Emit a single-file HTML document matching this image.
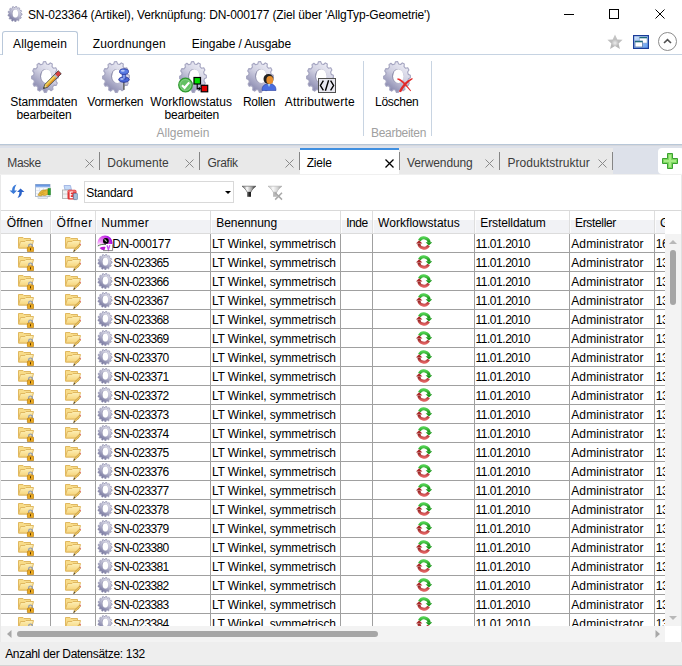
<!DOCTYPE html><html><head><meta charset="utf-8"><style>
*{margin:0;padding:0;box-sizing:border-box}
html,body{width:682px;height:666px;overflow:hidden;background:#fff}
body{position:relative;font-family:"Liberation Sans",sans-serif;font-size:12px;color:#000}
.t{position:absolute;white-space:nowrap;font-size:12px;line-height:16px}
.a{position:absolute}
svg.i{position:absolute;overflow:visible}

</style></head><body>
<svg width="0" height="0" style="position:absolute">
<defs>
<linearGradient id="gg" x1="0.85" y1="0.05" x2="0.25" y2="1">
<stop offset="0" stop-color="#f0f0f7"/><stop offset="0.45" stop-color="#d0d0e2"/><stop offset="1" stop-color="#8080a8"/></linearGradient>
<linearGradient id="gh" x1="0" y1="0" x2="1" y2="1">
<stop offset="0" stop-color="#7a7a9a"/><stop offset="1" stop-color="#c8c8dc"/></linearGradient>
<symbol id="gear" viewBox="0 0 32 32">
<path d="M27.26,13.38L29.31,14.21L29.38,16.79L27.38,17.78L26.89,20.20L28.30,22.10L27.24,24.37L25.08,24.08L23.60,25.89L24.00,28.35L22.09,29.71L20.35,28.22L18.28,28.94L17.55,31.30L15.31,31.38L14.45,29.08L12.35,28.51L10.69,30.14L8.71,28.92L8.97,26.44L7.39,24.74L5.25,25.19L4.07,23.01L5.37,21.00L4.74,18.62L2.69,17.79L2.62,15.21L4.62,14.22L5.11,11.80L3.70,9.90L4.76,7.63L6.92,7.92L8.40,6.11L8.00,3.65L9.91,2.29L11.65,3.78L13.72,3.06L14.45,0.70L16.69,0.62L17.55,2.92L19.65,3.49L21.31,1.86L23.29,3.08L23.03,5.56L24.61,7.26L26.75,6.81L27.93,8.99L26.63,11.00Z" fill="url(#gg)" stroke="#a4a4c0" stroke-width="1.1" stroke-linejoin="round"/>
<ellipse cx="16.8" cy="15.4" rx="5.7" ry="7.3" fill="url(#gh)"/>
<ellipse cx="17.3" cy="15.2" rx="5.2" ry="6.9" fill="#fff"/>
</symbol>
<linearGradient id="sg" x1="0.85" y1="0.05" x2="0.25" y2="1">
<stop offset="0" stop-color="#e4e4ee"/><stop offset="0.45" stop-color="#bcbcd2"/><stop offset="1" stop-color="#6c6c96"/></linearGradient>
<symbol id="sgear" viewBox="0 0 32 32">
<path d="M27.90,14.70L30.16,15.65L30.04,18.03L27.70,18.70L27.09,20.86L28.69,22.85L27.57,24.89L25.20,24.30L23.74,25.91L24.31,28.47L22.44,29.72L20.60,28.00L18.62,28.68L18.03,31.24L15.84,31.40L14.94,28.95L12.90,28.55L11.28,30.52L9.28,29.56L9.53,26.93L7.88,25.55L5.61,26.47L4.25,24.61L5.60,22.41L4.73,20.36L2.32,20.02L1.92,17.69L4.05,16.42L4.16,14.16L2.17,12.65L2.81,10.38L5.24,10.33L6.30,8.39L5.18,6.05L6.72,4.36L8.89,5.55L10.66,4.37L10.68,1.73L12.76,1.01L14.18,3.15L16.25,3.00L17.39,0.67L19.54,1.09L19.88,3.70L21.78,4.62L23.78,3.13L25.51,4.59L24.69,7.07L25.98,8.84L28.39,8.54L29.30,10.70L27.51,12.48Z" fill="url(#sg)" stroke="#9090b0" stroke-width="1.4" stroke-linejoin="round"/>
<ellipse cx="16.2" cy="15.2" rx="6.2" ry="8.4" fill="url(#gh)"/>
<ellipse cx="16.7" cy="15" rx="5.6" ry="7.9" fill="#fff"/>
</symbol>
<linearGradient id="fold" x1="0" y1="0" x2="0" y2="1"><stop offset="0" stop-color="#fdf0b8"/><stop offset="1" stop-color="#f6d47a"/></linearGradient>
<symbol id="folder" viewBox="0 0 16 16">
<path d="M0.5,1.5 H5 L6,2.5 H12.5 V12 H0.5 Z" fill="#f8dc88" stroke="#e0b860" stroke-width="1"/>
<path d="M2.5,5.5 H7 L8,4.5 H15.5 L13.5,12 H0.5 Z" fill="url(#fold)" stroke="#e0b860" stroke-width="1"/>
</symbol>
<symbol id="lockf" viewBox="0 0 16 16">
<use href="#folder" width="16" height="16"/>
<path d="M10.7,11 V9.8 A1.8,1.8 0 0 1 14.3,9.8 V11" fill="none" stroke="#8a9ab8" stroke-width="1.2"/>
<rect x="9.4" y="11" width="6.2" height="4.8" rx="0.8" fill="#eaaa22" stroke="#c08418" stroke-width="0.8"/>
<rect x="12.05" y="12.2" width="0.9" height="2.2" fill="#402808"/>
</symbol>
<symbol id="penf" viewBox="0 0 16 16">
<use href="#folder" width="16" height="16"/>
<path d="M8.5,16 L9.2,13.5 L14.5,8.2 L15.6,9.3 L10.3,14.6 Z" fill="#f0c860" stroke="#b08830" stroke-width="0.6"/>
<path d="M8.5,16 L9.2,13.5 L10.3,14.6Z" fill="#444"/>
<path d="M14.5,8.2 L15.6,9.3 L16,8.6 L15.2,7.6Z" fill="#e06060"/>
</symbol>
<linearGradient id="wg" x1="0" y1="0" x2="0" y2="1"><stop offset="0" stop-color="#50d050"/><stop offset="1" stop-color="#108a10"/></linearGradient>
<linearGradient id="wr" x1="0" y1="1" x2="0" y2="0"><stop offset="0" stop-color="#e06060"/><stop offset="1" stop-color="#8a1c1c"/></linearGradient>
<symbol id="wf" viewBox="0 0 16 16">
<path d="M3.4,5.4 A5.3,5.3 0 0 1 13.2,7.4" fill="none" stroke="url(#wg)" stroke-width="3"/>
<path d="M9.6,7.2 L16.2,7.2 L12.9,10.6Z" fill="#189818"/>
<path d="M12.6,10.6 A5.3,5.3 0 0 1 2.8,8.6" fill="none" stroke="url(#wr)" stroke-width="3"/>
<path d="M-0.2,8.6 L6.4,8.6 L3.1,5.2Z" fill="#a82828"/>
</symbol>
</defs></svg>
<svg class="i" style="left:7px;top:6px" width="16" height="16" viewBox="0 0 16 16"><use href="#sgear" width="16" height="16"/></svg>
<div class="t" style="left:28.0px;top:7.0px;letter-spacing:-0.143px;">SN-023364 (Artikel), Verknüpfung: DN-000177 (Ziel über 'AllgTyp-Geometrie')</div>
<div class="a" style="left:564px;top:14px;width:10px;height:1px;background:#000;"></div>
<div class="a" style="left:609px;top:9px;width:10px;height:10px;border:1px solid #000"></div>
<svg class="i" style="left:655px;top:9px" width="10" height="10"><path d="M0.5,0.5 L9.5,9.5 M9.5,0.5 L0.5,9.5" stroke="#000" stroke-width="1"/></svg>
<div class="a" style="left:0px;top:54px;width:682px;height:1px;background:#c6d3e2;"></div>
<div class="a" style="left:2px;top:31px;width:76px;height:24px;background:#fff;border:1px solid #b9c8da;border-bottom:none;border-radius:3px 3px 0 0"></div>
<div class="t" style="left:13.0px;top:36.0px;letter-spacing:0.144px;">Allgemein</div>
<div class="t" style="left:92.8px;top:36.0px;letter-spacing:0.148px;">Zuordnungen</div>
<div class="t" style="left:191.8px;top:36.0px;letter-spacing:-0.089px;">Eingabe / Ausgabe</div>
<svg class="i" style="left:607px;top:34px" width="16" height="16" viewBox="0 0 16 16"><defs><linearGradient id="st" x1="0" y1="0" x2="0" y2="1"><stop offset="0" stop-color="#c8c8c8"/><stop offset="1" stop-color="#b4b4b4"/></linearGradient><radialGradient id="st2" cx="0.5" cy="0.55" r="0.4"><stop offset="0" stop-color="#ececec"/><stop offset="1" stop-color="#ececec" stop-opacity="0"/></radialGradient></defs><path d="M8,0.5 L10.3,5.5 L15.6,5.8 L11.6,9.4 L12.9,15 L8,12.1 L3.1,15 L4.4,9.4 L0.4,5.8 L5.7,5.5Z" fill="url(#st)"/><circle cx="8" cy="8.6" r="4.5" fill="url(#st2)"/></svg>
<svg class="i" style="left:633px;top:35px" width="16" height="14" viewBox="0 0 16 14"><defs><linearGradient id="wi" x1="0" y1="0" x2="1" y2="1"><stop offset="0" stop-color="#d8e8fc"/><stop offset="1" stop-color="#5a96ec"/></linearGradient></defs><rect x="0.6" y="0.6" width="14.8" height="12.8" fill="url(#wi)" stroke="#1a3c98" stroke-width="1.2"/><rect x="6.5" y="2" width="7.5" height="6" fill="#fff" stroke="#90a8c8" stroke-width="0.5"/><rect x="6.5" y="2" width="7.5" height="1.3" fill="#1e6c7a"/><rect x="2" y="6" width="7.5" height="6" fill="#fff" stroke="#5a78a8" stroke-width="0.8"/><rect x="2" y="6" width="7.5" height="1.3" fill="#1e6c7a"/></svg>
<svg class="i" style="left:658px;top:32px" width="19" height="19" viewBox="0 0 19 19"><circle cx="9.5" cy="9.5" r="9" fill="#fff" stroke="#8c8c8c" stroke-width="1"/><path d="M6,11 L9.5,7.6 L13,11" fill="none" stroke="#505050" stroke-width="1.6"/></svg>
<svg class="i" style="left:28.5px;top:60.5px" width="32" height="32" viewBox="0 0 32 32"><use href="#gear" width="32" height="32"/></svg>
<svg class="i" style="left:99.5px;top:60.5px" width="32" height="32" viewBox="0 0 32 32"><use href="#gear" width="32" height="32"/></svg>
<svg class="i" style="left:176.5px;top:60.5px" width="32" height="32" viewBox="0 0 32 32"><use href="#gear" width="32" height="32"/></svg>
<svg class="i" style="left:243.5px;top:60.5px" width="32" height="32" viewBox="0 0 32 32"><use href="#gear" width="32" height="32"/></svg>
<svg class="i" style="left:303.5px;top:60.5px" width="32" height="32" viewBox="0 0 32 32"><use href="#gear" width="32" height="32"/></svg>
<svg class="i" style="left:380.5px;top:60.5px" width="32" height="32" viewBox="0 0 32 32"><use href="#gear" width="32" height="32"/></svg>
<svg class="i" style="left:42px;top:71px" width="20" height="20" viewBox="0 0 20 20"><path d="M1.50,17.50 L2.63,13.68 L5.32,16.37Z" fill="#f4e080"/><path d="M2.63,13.68 L11.82,4.49 L13.17,5.83 L3.97,15.03Z" fill="#f8d850"/><path d="M3.97,15.03 L13.17,5.83 L14.51,7.18 L5.32,16.37Z" fill="#eca020"/><path d="M11.82,4.49 L13.24,3.08 L15.92,5.76 L14.51,7.18Z" fill="#b8b8b8"/><path d="M13.10,2.93 L16.28,-0.25 L19.25,2.72 L16.07,5.90Z" fill="#d84040"/><path d="M1.50,17.50 L1.92,16.09 L2.91,17.08Z" fill="#111"/><path d="M1.50,17.50 L2.63,13.68 L16.28,-0.25 L19.25,2.72 L5.32,16.37Z" fill="none" stroke="#222" stroke-width="0.7" stroke-linejoin="round"/></svg>
<svg class="i" style="left:115.8px;top:67px" width="16" height="26" viewBox="0 0 16 26"><rect x="7" y="14" width="1.6" height="8.8" fill="#6c6c6c"/><ellipse cx="8" cy="12.6" rx="5.3" ry="2.7" fill="#4a68d8" stroke="#1e2c90" stroke-width="0.8"/><rect x="6.2" y="6.5" width="3.6" height="5.5" fill="#7c98ec" stroke="#1e2c90" stroke-width="0.6"/><ellipse cx="8" cy="4.6" rx="4.5" ry="2.8" fill="#5a7ce4" stroke="#1e2c90" stroke-width="0.8"/><ellipse cx="6.8" cy="3.8" rx="2" ry="1" fill="#b8c8f8"/><ellipse cx="6" cy="12" rx="1.8" ry="0.9" fill="#a0b4f0"/></svg>
<svg class="i" style="left:176.5px;top:76px" width="34" height="18" viewBox="0 0 34 18"><circle cx="8.5" cy="9" r="6.8" fill="#62c062" stroke="#2e9a2e" stroke-width="1.2"/><circle cx="8.5" cy="9" r="5.4" fill="none" stroke="#9ad89a" stroke-width="0.6"/><path d="M5,9.2 L7.6,11.8 L12.2,6.4" fill="none" stroke="#fff" stroke-width="2.2"/><rect x="17" y="1.5" width="6.5" height="6.5" fill="#00e000" stroke="#000" stroke-width="1.2"/><rect x="24.2" y="9.3" width="6.5" height="6.5" fill="#e00000" stroke="#000" stroke-width="1.2"/><path d="M20.2,8 V12.6 H22.5" fill="none" stroke="#000" stroke-width="1.1"/><path d="M21.8,10.8 L24.2,12.6 L21.8,14.4Z" fill="#000"/></svg>
<svg class="i" style="left:261px;top:73px" width="16" height="18" viewBox="0 0 16 18"><path d="M1,17.5 C1,12 4,11 8,11 C12,11 15,12 15,17.5Z" fill="#4a6ee0" stroke="#2a40a0" stroke-width="0.6"/><path d="M6.5,11 L8,14 L9.5,11Z" fill="#a8d0f0"/><circle cx="7.5" cy="6" r="5" fill="#222"/><ellipse cx="8.8" cy="7" rx="3.4" ry="4" fill="#e89030"/></svg>
<svg class="i" style="left:318px;top:78px" width="18" height="15" viewBox="0 0 18 15"><rect x="0.5" y="0.5" width="17" height="14" fill="#e8e8f0" stroke="#505050" stroke-width="1"/><path d="M5.4,2.6 L2.4,7.5 L5.4,12.4 M12.6,2.6 L15.6,7.5 L12.6,12.4 M10.6,2.2 L7.4,12.8" fill="none" stroke="#000" stroke-width="1.4"/></svg>
<svg class="i" style="left:392px;top:72px" width="26" height="24" viewBox="0 0 26 24"><path d="M5.6,6.2 C8.5,6.4 11,8.6 13.5,11.5 C15.5,13.8 17.5,16.5 19.2,18.8 L18.4,19.2 C16.5,17 14.2,14.5 12,12.4 C9.8,10.2 7.5,8.6 5.2,7.6Z" fill="#e83030"/><path d="M20.2,6 L20.8,6.9 C17.5,9 15,11.5 13,14 C11.5,16 10.2,18 9,20.2 L6.8,19.6 C8,17 9.5,14.5 11.5,12.2 C14,9.5 17,7.3 20.2,6Z" fill="#e02828"/></svg>
<div class="t" style="left:10.3px;top:94.0px;letter-spacing:-0.102px;">Stammdaten</div>
<div class="t" style="left:16.5px;top:107.0px;letter-spacing:-0.170px;">bearbeiten</div>
<div class="t" style="left:87.3px;top:94.0px;letter-spacing:-0.226px;">Vormerken</div>
<div class="t" style="left:150.3px;top:94.0px;letter-spacing:0.041px;">Workflowstatus</div>
<div class="t" style="left:164.6px;top:107.0px;letter-spacing:-0.230px;">bearbeiten</div>
<div class="t" style="left:243.0px;top:94.0px;letter-spacing:-0.339px;">Rollen</div>
<div class="t" style="left:284.8px;top:94.0px;letter-spacing:0.204px;">Attributwerte</div>
<div class="t" style="left:375.0px;top:94.0px;letter-spacing:-0.266px;">Löschen</div>
<div class="t" style="left:156.4px;top:125.0px;letter-spacing:0.033px;color:#a0a0a0;">Allgemein</div>
<div class="t" style="left:371.0px;top:125.0px;letter-spacing:-0.303px;color:#a0a0a0;">Bearbeiten</div>
<div class="a" style="left:363px;top:61px;width:1px;height:75px;background:#c8d4e2;"></div>
<div class="a" style="left:431px;top:61px;width:1px;height:75px;background:#c8d4e2;"></div>
<div class="a" style="left:0px;top:144px;width:682px;height:1px;background:#b8c7d8;"></div>
<div class="a" style="left:0px;top:145px;width:682px;height:30px;background:#dde1ea;"></div>
<div class="a" style="left:0px;top:145px;width:682px;height:1px;background:#d5d7dc;"></div>
<div class="a" style="left:0px;top:148px;width:613px;height:27px;background:#e9e9e9;"></div>
<div class="t" style="left:7.3px;top:155.0px;letter-spacing:-0.369px;color:#3c3c3c;">Maske</div>
<div class="a" style="left:99px;top:152px;width:1px;height:18px;background:#858585;"></div>
<div class="t" style="left:107.3px;top:155.0px;letter-spacing:0.005px;color:#3c3c3c;">Dokumente</div>
<div class="a" style="left:199px;top:152px;width:1px;height:18px;background:#858585;"></div>
<div class="t" style="left:207.4px;top:155.0px;letter-spacing:-0.267px;color:#3c3c3c;">Grafik</div>
<div class="a" style="left:299px;top:152px;width:1px;height:18px;background:#858585;"></div>
<div class="t" style="left:407.1px;top:155.0px;letter-spacing:-0.122px;color:#3c3c3c;">Verwendung</div>
<div class="a" style="left:499px;top:152px;width:1px;height:18px;background:#858585;"></div>
<div class="t" style="left:507.4px;top:155.0px;letter-spacing:0.064px;color:#3c3c3c;">Produktstruktur</div>
<div class="a" style="left:612px;top:152px;width:1px;height:18px;background:#858585;"></div>
<svg class="i" style="left:85px;top:159px" width="9" height="9"><path d="M0.5,0.5 L8.5,8.5 M8.5,0.5 L0.5,8.5" stroke="#8a8a8a" stroke-width="1"/></svg>
<svg class="i" style="left:185px;top:159px" width="9" height="9"><path d="M0.5,0.5 L8.5,8.5 M8.5,0.5 L0.5,8.5" stroke="#8a8a8a" stroke-width="1"/></svg>
<svg class="i" style="left:285px;top:159px" width="9" height="9"><path d="M0.5,0.5 L8.5,8.5 M8.5,0.5 L0.5,8.5" stroke="#8a8a8a" stroke-width="1"/></svg>
<svg class="i" style="left:485px;top:159px" width="9" height="9"><path d="M0.5,0.5 L8.5,8.5 M8.5,0.5 L0.5,8.5" stroke="#8a8a8a" stroke-width="1"/></svg>
<svg class="i" style="left:598px;top:159px" width="9" height="9"><path d="M0.5,0.5 L8.5,8.5 M8.5,0.5 L0.5,8.5" stroke="#8a8a8a" stroke-width="1"/></svg>
<div class="a" style="left:300px;top:148px;width:99px;height:26px;background:#fff;"></div>
<div class="a" style="left:300px;top:148px;width:99px;height:2px;background:#3f8fe0;"></div>
<div class="a" style="left:299px;top:152px;width:1px;height:18px;background:#858585;"></div>
<div class="a" style="left:399px;top:152px;width:1px;height:18px;background:#858585;"></div>
<div class="a" style="left:0px;top:174px;width:682px;height:1px;background:#f0f0f0;"></div>
<div class="t" style="left:306.7px;top:155.0px;letter-spacing:-0.163px;">Ziele</div>
<svg class="i" style="left:385px;top:159px" width="9" height="9"><path d="M0.5,0.5 L8.5,8.5 M8.5,0.5 L0.5,8.5" stroke="#000" stroke-width="1.3"/></svg>
<div class="a" style="left:658px;top:148px;width:26px;height:26px;background:#fff;border-radius:4px"></div>
<svg class="i" style="left:662px;top:153px" width="16" height="16" viewBox="0 0 16 16"><path d="M5.5,0.5 H10.5 V5.5 H15.5 V10.5 H10.5 V15.5 H5.5 V10.5 H0.5 V5.5 H5.5Z" fill="#7ed860" stroke="#3aa030" stroke-width="1"/><path d="M7,2 H9 V7 H14 V9 H9 V14 H7 V9 H2 V7 H7Z" fill="#a8ec88"/></svg>
<div class="a" style="left:0px;top:175px;width:682px;height:491px;background:#e9e9e9;"></div>
<div class="a" style="left:1px;top:175px;width:680px;height:451px;background:#fff;"></div>
<svg class="i" style="left:9px;top:184px" width="16" height="15" viewBox="0 0 16 15"><path d="M7.5,0.5 C4,1.5 3,4 3.2,6.5 L0.5,6.5 L4.5,10 L8,6.5 L5.6,6.5 C5.6,4.5 6.2,2.5 7.5,0.5Z" fill="#3a7ad8"/><path d="M8.5,14 C12,13 13,10.5 12.8,8 L15.5,8 L11.5,4.5 L8,8 L10.4,8 C10.4,10 9.8,12 8.5,14Z" fill="#2a62c8"/></svg>
<svg class="i" style="left:35px;top:184px" width="16" height="15" viewBox="0 0 16 15"><defs><linearGradient id="tb" x1="0" y1="0" x2="0" y2="1"><stop offset="0" stop-color="#4a82dc"/><stop offset="1" stop-color="#a8c4f0"/></linearGradient></defs><rect x="0.5" y="0.5" width="14.5" height="12" fill="#f8fafc" stroke="#b0bccc"/><rect x="0.5" y="0.5" width="14.5" height="3" fill="url(#tb)"/><path d="M1,6.5 H14.5 M1,9.5 H14.5 M4.5,3.5 V12 M8.5,3.5 V12 M12,3.5 V12" stroke="#dde4ee" stroke-width="0.8"/><rect x="3" y="12.5" width="9.5" height="2" fill="#e4eaf2" stroke="#b8c4d0" stroke-width="0.6"/><path d="M2.8,11.2 L5,8 L7,6.2 L13,5.6 L13,10.4 L10,11.6 L7.5,11.2 L6,12 Z" fill="#e8b838" stroke="#a87c18" stroke-width="0.5"/><path d="M5,9.5 L8.5,8.2 M6,10.8 L9.5,9.6 M7.5,7.2 L11,6.8" stroke="#b88a20" stroke-width="0.5"/><rect x="13" y="4.4" width="2.5" height="6.6" fill="#2aa02a" stroke="#1a7a1a" stroke-width="0.4"/></svg>
<svg class="i" style="left:62px;top:185px" width="16" height="15" viewBox="0 0 16 15"><path d="M2,0.5 H8.5 L9.5,5 H3Z" fill="#c4daf8" stroke="#98ace0" stroke-width="0.8"/><rect x="0.5" y="5" width="8" height="8.5" fill="#f2f2f2" stroke="#a8a8a8" stroke-width="0.8"/><path d="M1,9 H7.5" stroke="#c8c8c8" stroke-width="0.8"/><rect x="5.5" y="4.8" width="9" height="9.8" rx="1.6" fill="#e03434"/><rect x="6" y="5.2" width="8" height="2" rx="1" fill="#f07070"/><path d="M8.2,7 V12.6 H10.8 M8.2,9.8 H10.3 M8.2,7 H10.8" fill="none" stroke="#fff" stroke-width="1.1"/><rect x="11.6" y="8.4" width="3.8" height="6.2" rx="0.6" fill="#a8c0d8" stroke="#5a82aa" stroke-width="0.7"/></svg>
<div class="a" style="left:84px;top:181px;width:150px;height:22px;border:1px solid #d9d9d9;background:#fff"></div>
<div class="t" style="left:86.3px;top:185.0px;letter-spacing:-0.273px;">Standard</div>
<svg class="i" style="left:225px;top:191px" width="6" height="3" viewBox="0 0 6 3"><path d="M0,0 H6 L3,3Z" fill="#000"/></svg>
<svg class="i" style="left:242px;top:186px" width="14" height="11" viewBox="0 0 14 11"><defs><linearGradient id="fl" x1="0" y1="0" x2="1" y2="0"><stop offset="0" stop-color="#585858"/><stop offset="0.35" stop-color="#fcfcfc"/><stop offset="0.7" stop-color="#a0a0a0"/><stop offset="1" stop-color="#000"/></linearGradient><linearGradient id="fn" x1="0" y1="0" x2="1" y2="0"><stop offset="0" stop-color="#707070"/><stop offset="0.5" stop-color="#303030"/><stop offset="1" stop-color="#000"/></linearGradient></defs><path d="M0,0.2 H14 C11.5,2.2 9.6,4 8.9,6.2 H5.1 C4.4,4 2.5,2.2 0,0.2Z" fill="url(#fl)" stroke="#505050" stroke-width="0.6" stroke-linejoin="round"/><rect x="5.1" y="6" width="3.8" height="4.8" fill="url(#fn)"/></svg>
<svg class="i" style="left:268px;top:186px" width="15" height="14" viewBox="0 0 15 14"><defs><linearGradient id="fl2" x1="0" y1="0" x2="1" y2="0"><stop offset="0" stop-color="#b8b8b8"/><stop offset="0.35" stop-color="#fafafa"/><stop offset="0.7" stop-color="#d0d0d0"/><stop offset="1" stop-color="#888"/></linearGradient></defs><path d="M0,0.2 H14 C11.5,2.2 9.6,4 8.9,6.2 H5.1 C4.4,4 2.5,2.2 0,0.2Z" fill="url(#fl2)" stroke="#b0b0b0" stroke-width="0.6" stroke-linejoin="round"/><rect x="5.1" y="6" width="3.8" height="4.8" fill="#b8b8b8"/><path d="M7.2,6.8 L14,13.6 M14,6.8 L7.2,13.6" stroke="#a8a8a8" stroke-width="1.5"/></svg>
<div class="a" style="left:1px;top:210px;width:680px;height:1px;background:#d9d9d9;"></div>
<div class="a" style="left:1px;top:211px;width:664px;height:9px;background:#ffffff;"></div>
<div class="a" style="left:1px;top:220px;width:664px;height:13px;background:#f1f2f5;"></div>
<div class="a" style="left:1px;top:233px;width:664px;height:1px;background:#dcdcdc;"></div>
<div class="a" style="left:50px;top:211px;width:1px;height:22px;background:#dedede;"></div>
<div class="a" style="left:51px;top:220px;width:1px;height:13px;background:#fbfbfc;"></div>
<div class="a" style="left:95px;top:211px;width:1px;height:22px;background:#dedede;"></div>
<div class="a" style="left:96px;top:220px;width:1px;height:13px;background:#fbfbfc;"></div>
<div class="a" style="left:210px;top:211px;width:1px;height:22px;background:#dedede;"></div>
<div class="a" style="left:211px;top:220px;width:1px;height:13px;background:#fbfbfc;"></div>
<div class="a" style="left:340px;top:211px;width:1px;height:22px;background:#dedede;"></div>
<div class="a" style="left:341px;top:220px;width:1px;height:13px;background:#fbfbfc;"></div>
<div class="a" style="left:372px;top:211px;width:1px;height:22px;background:#dedede;"></div>
<div class="a" style="left:373px;top:220px;width:1px;height:13px;background:#fbfbfc;"></div>
<div class="a" style="left:474px;top:211px;width:1px;height:22px;background:#dedede;"></div>
<div class="a" style="left:475px;top:220px;width:1px;height:13px;background:#fbfbfc;"></div>
<div class="a" style="left:569px;top:211px;width:1px;height:22px;background:#dedede;"></div>
<div class="a" style="left:570px;top:220px;width:1px;height:13px;background:#fbfbfc;"></div>
<div class="a" style="left:654px;top:211px;width:1px;height:22px;background:#dedede;"></div>
<div class="a" style="left:655px;top:220px;width:1px;height:13px;background:#fbfbfc;"></div>
<div class="t" style="left:6.8px;top:215.0px;letter-spacing:0.086px;">Öffnen</div>
<div class="t" style="left:56.6px;top:215.0px;letter-spacing:0.482px;width:35.6px;overflow:hidden;">Öffner</div>
<div class="t" style="left:101.3px;top:215.0px;letter-spacing:0.297px;">Nummer</div>
<div class="t" style="left:216.3px;top:215.0px;letter-spacing:-0.075px;">Benennung</div>
<div class="t" style="left:346.2px;top:215.0px;letter-spacing:-0.469px;width:22.3px;overflow:hidden;">Index</div>
<div class="t" style="left:378.1px;top:215.0px;letter-spacing:0.034px;">Workflowstatus</div>
<div class="t" style="left:480.3px;top:215.0px;letter-spacing:-0.107px;">Erstelldatum</div>
<div class="t" style="left:575.0px;top:215.0px;letter-spacing:-0.335px;">Ersteller</div>
<div class="t" style="left:660.0px;top:215.0px;letter-spacing:-0.002px;width:5.0px;overflow:hidden;">Geändert</div>
<svg class="i" style="left:18px;top:236px" width="16" height="16" viewBox="0 0 16 16"><use href="#lockf" width="16" height="16"/></svg>
<svg class="i" style="left:65px;top:236px" width="16" height="16" viewBox="0 0 16 16"><use href="#penf" width="16" height="16"/></svg>
<svg class="i" style="left:97px;top:235px" width="16" height="16" viewBox="0 0 16 16"><defs><radialGradient id="dn" cx="0.15" cy="0.65" r="0.9"><stop offset="0" stop-color="#ffffff"/><stop offset="0.3" stop-color="#f090f8"/><stop offset="0.7" stop-color="#d040e8"/><stop offset="1" stop-color="#9000e0"/></radialGradient></defs><circle cx="8" cy="8" r="7.6" fill="url(#dn)"/><path d="M0.6,10.5 C3,9 6.5,8.5 9,9 L15.5,9 V16 H6 C3,15.5 1.2,13.5 0.6,10.5Z" fill="#fff"/><path d="M0.8,11 C3,9.5 6.5,9 9,9.5" fill="none" stroke="#406040" stroke-width="0.9"/><path d="M2.5,13 C4.5,12 6.5,11.5 8.5,12 L7.5,15 C5.5,15.3 3.8,14.5 2.5,13Z" fill="#b818d0"/><circle cx="8.9" cy="5.9" r="2.9" fill="#000"/><path d="M7.6,4.4 L9.8,6.6" stroke="#b0d8b0" stroke-width="1.1"/><path d="M10,10.2 L11.4,14.6 L12.8,10.2" fill="none" stroke="#c850f0" stroke-width="1.3"/><path d="M6,15.6 H15.6 V9.5" fill="none" stroke="#707070" stroke-width="0.8"/></svg>
<div class="t" style="left:112.3px;top:236.0px;letter-spacing:-0.353px;">DN-000177</div>
<div class="t" style="left:211.9px;top:236.0px;letter-spacing:-0.102px;">LT Winkel, symmetrisch</div>
<svg class="i" style="left:416px;top:235px" width="16" height="16" viewBox="0 0 16 16"><use href="#wf" width="16" height="16"/></svg>
<div class="t" style="left:475.5px;top:236.0px;letter-spacing:-0.474px;">11.01.2010</div>
<div class="t" style="left:571.2px;top:236.0px;letter-spacing:0.132px;">Administrator</div>
<div class="t" style="left:655.8px;top:236.0px;letter-spacing:-0.563px;width:9.2px;overflow:hidden;">16.03.2010</div>
<div class="a" style="left:1px;top:252px;width:664px;height:1px;background:#a0a0a0;"></div>
<svg class="i" style="left:18px;top:255px" width="16" height="16" viewBox="0 0 16 16"><use href="#lockf" width="16" height="16"/></svg>
<svg class="i" style="left:65px;top:255px" width="16" height="16" viewBox="0 0 16 16"><use href="#penf" width="16" height="16"/></svg>
<svg class="i" style="left:96.8px;top:254px" width="16" height="16" viewBox="0 0 16 16"><use href="#sgear" width="16" height="16"/></svg>
<div class="t" style="left:113.5px;top:255.0px;letter-spacing:-0.623px;">SN-023365</div>
<div class="t" style="left:211.9px;top:255.0px;letter-spacing:-0.102px;">LT Winkel, symmetrisch</div>
<svg class="i" style="left:416px;top:254px" width="16" height="16" viewBox="0 0 16 16"><use href="#wf" width="16" height="16"/></svg>
<div class="t" style="left:475.5px;top:255.0px;letter-spacing:-0.474px;">11.01.2010</div>
<div class="t" style="left:571.2px;top:255.0px;letter-spacing:0.132px;">Administrator</div>
<div class="t" style="left:655.8px;top:255.0px;letter-spacing:-0.563px;width:9.2px;overflow:hidden;">13.01.2010</div>
<div class="a" style="left:1px;top:271px;width:664px;height:1px;background:#a0a0a0;"></div>
<svg class="i" style="left:18px;top:274px" width="16" height="16" viewBox="0 0 16 16"><use href="#lockf" width="16" height="16"/></svg>
<svg class="i" style="left:65px;top:274px" width="16" height="16" viewBox="0 0 16 16"><use href="#penf" width="16" height="16"/></svg>
<svg class="i" style="left:96.8px;top:273px" width="16" height="16" viewBox="0 0 16 16"><use href="#sgear" width="16" height="16"/></svg>
<div class="t" style="left:113.5px;top:274.0px;letter-spacing:-0.623px;">SN-023366</div>
<div class="t" style="left:211.9px;top:274.0px;letter-spacing:-0.102px;">LT Winkel, symmetrisch</div>
<svg class="i" style="left:416px;top:273px" width="16" height="16" viewBox="0 0 16 16"><use href="#wf" width="16" height="16"/></svg>
<div class="t" style="left:475.5px;top:274.0px;letter-spacing:-0.474px;">11.01.2010</div>
<div class="t" style="left:571.2px;top:274.0px;letter-spacing:0.132px;">Administrator</div>
<div class="t" style="left:655.8px;top:274.0px;letter-spacing:-0.563px;width:9.2px;overflow:hidden;">13.01.2010</div>
<div class="a" style="left:1px;top:290px;width:664px;height:1px;background:#a0a0a0;"></div>
<svg class="i" style="left:18px;top:293px" width="16" height="16" viewBox="0 0 16 16"><use href="#lockf" width="16" height="16"/></svg>
<svg class="i" style="left:65px;top:293px" width="16" height="16" viewBox="0 0 16 16"><use href="#penf" width="16" height="16"/></svg>
<svg class="i" style="left:96.8px;top:292px" width="16" height="16" viewBox="0 0 16 16"><use href="#sgear" width="16" height="16"/></svg>
<div class="t" style="left:113.5px;top:293.0px;letter-spacing:-0.623px;">SN-023367</div>
<div class="t" style="left:211.9px;top:293.0px;letter-spacing:-0.102px;">LT Winkel, symmetrisch</div>
<svg class="i" style="left:416px;top:292px" width="16" height="16" viewBox="0 0 16 16"><use href="#wf" width="16" height="16"/></svg>
<div class="t" style="left:475.5px;top:293.0px;letter-spacing:-0.474px;">11.01.2010</div>
<div class="t" style="left:571.2px;top:293.0px;letter-spacing:0.132px;">Administrator</div>
<div class="t" style="left:655.8px;top:293.0px;letter-spacing:-0.563px;width:9.2px;overflow:hidden;">13.01.2010</div>
<div class="a" style="left:1px;top:309px;width:664px;height:1px;background:#a0a0a0;"></div>
<svg class="i" style="left:18px;top:312px" width="16" height="16" viewBox="0 0 16 16"><use href="#lockf" width="16" height="16"/></svg>
<svg class="i" style="left:65px;top:312px" width="16" height="16" viewBox="0 0 16 16"><use href="#penf" width="16" height="16"/></svg>
<svg class="i" style="left:96.8px;top:311px" width="16" height="16" viewBox="0 0 16 16"><use href="#sgear" width="16" height="16"/></svg>
<div class="t" style="left:113.5px;top:312.0px;letter-spacing:-0.623px;">SN-023368</div>
<div class="t" style="left:211.9px;top:312.0px;letter-spacing:-0.102px;">LT Winkel, symmetrisch</div>
<svg class="i" style="left:416px;top:311px" width="16" height="16" viewBox="0 0 16 16"><use href="#wf" width="16" height="16"/></svg>
<div class="t" style="left:475.5px;top:312.0px;letter-spacing:-0.474px;">11.01.2010</div>
<div class="t" style="left:571.2px;top:312.0px;letter-spacing:0.132px;">Administrator</div>
<div class="t" style="left:655.8px;top:312.0px;letter-spacing:-0.563px;width:9.2px;overflow:hidden;">13.01.2010</div>
<div class="a" style="left:1px;top:328px;width:664px;height:1px;background:#a0a0a0;"></div>
<svg class="i" style="left:18px;top:331px" width="16" height="16" viewBox="0 0 16 16"><use href="#lockf" width="16" height="16"/></svg>
<svg class="i" style="left:65px;top:331px" width="16" height="16" viewBox="0 0 16 16"><use href="#penf" width="16" height="16"/></svg>
<svg class="i" style="left:96.8px;top:330px" width="16" height="16" viewBox="0 0 16 16"><use href="#sgear" width="16" height="16"/></svg>
<div class="t" style="left:113.5px;top:331.0px;letter-spacing:-0.623px;">SN-023369</div>
<div class="t" style="left:211.9px;top:331.0px;letter-spacing:-0.102px;">LT Winkel, symmetrisch</div>
<svg class="i" style="left:416px;top:330px" width="16" height="16" viewBox="0 0 16 16"><use href="#wf" width="16" height="16"/></svg>
<div class="t" style="left:475.5px;top:331.0px;letter-spacing:-0.474px;">11.01.2010</div>
<div class="t" style="left:571.2px;top:331.0px;letter-spacing:0.132px;">Administrator</div>
<div class="t" style="left:655.8px;top:331.0px;letter-spacing:-0.563px;width:9.2px;overflow:hidden;">13.01.2010</div>
<div class="a" style="left:1px;top:347px;width:664px;height:1px;background:#a0a0a0;"></div>
<svg class="i" style="left:18px;top:350px" width="16" height="16" viewBox="0 0 16 16"><use href="#lockf" width="16" height="16"/></svg>
<svg class="i" style="left:65px;top:350px" width="16" height="16" viewBox="0 0 16 16"><use href="#penf" width="16" height="16"/></svg>
<svg class="i" style="left:96.8px;top:349px" width="16" height="16" viewBox="0 0 16 16"><use href="#sgear" width="16" height="16"/></svg>
<div class="t" style="left:113.5px;top:350.0px;letter-spacing:-0.623px;">SN-023370</div>
<div class="t" style="left:211.9px;top:350.0px;letter-spacing:-0.102px;">LT Winkel, symmetrisch</div>
<svg class="i" style="left:416px;top:349px" width="16" height="16" viewBox="0 0 16 16"><use href="#wf" width="16" height="16"/></svg>
<div class="t" style="left:475.5px;top:350.0px;letter-spacing:-0.474px;">11.01.2010</div>
<div class="t" style="left:571.2px;top:350.0px;letter-spacing:0.132px;">Administrator</div>
<div class="t" style="left:655.8px;top:350.0px;letter-spacing:-0.563px;width:9.2px;overflow:hidden;">13.01.2010</div>
<div class="a" style="left:1px;top:366px;width:664px;height:1px;background:#a0a0a0;"></div>
<svg class="i" style="left:18px;top:369px" width="16" height="16" viewBox="0 0 16 16"><use href="#lockf" width="16" height="16"/></svg>
<svg class="i" style="left:65px;top:369px" width="16" height="16" viewBox="0 0 16 16"><use href="#penf" width="16" height="16"/></svg>
<svg class="i" style="left:96.8px;top:368px" width="16" height="16" viewBox="0 0 16 16"><use href="#sgear" width="16" height="16"/></svg>
<div class="t" style="left:113.5px;top:369.0px;letter-spacing:-0.623px;">SN-023371</div>
<div class="t" style="left:211.9px;top:369.0px;letter-spacing:-0.102px;">LT Winkel, symmetrisch</div>
<svg class="i" style="left:416px;top:368px" width="16" height="16" viewBox="0 0 16 16"><use href="#wf" width="16" height="16"/></svg>
<div class="t" style="left:475.5px;top:369.0px;letter-spacing:-0.474px;">11.01.2010</div>
<div class="t" style="left:571.2px;top:369.0px;letter-spacing:0.132px;">Administrator</div>
<div class="t" style="left:655.8px;top:369.0px;letter-spacing:-0.563px;width:9.2px;overflow:hidden;">13.01.2010</div>
<div class="a" style="left:1px;top:385px;width:664px;height:1px;background:#a0a0a0;"></div>
<svg class="i" style="left:18px;top:388px" width="16" height="16" viewBox="0 0 16 16"><use href="#lockf" width="16" height="16"/></svg>
<svg class="i" style="left:65px;top:388px" width="16" height="16" viewBox="0 0 16 16"><use href="#penf" width="16" height="16"/></svg>
<svg class="i" style="left:96.8px;top:387px" width="16" height="16" viewBox="0 0 16 16"><use href="#sgear" width="16" height="16"/></svg>
<div class="t" style="left:113.5px;top:388.0px;letter-spacing:-0.623px;">SN-023372</div>
<div class="t" style="left:211.9px;top:388.0px;letter-spacing:-0.102px;">LT Winkel, symmetrisch</div>
<svg class="i" style="left:416px;top:387px" width="16" height="16" viewBox="0 0 16 16"><use href="#wf" width="16" height="16"/></svg>
<div class="t" style="left:475.5px;top:388.0px;letter-spacing:-0.474px;">11.01.2010</div>
<div class="t" style="left:571.2px;top:388.0px;letter-spacing:0.132px;">Administrator</div>
<div class="t" style="left:655.8px;top:388.0px;letter-spacing:-0.563px;width:9.2px;overflow:hidden;">13.01.2010</div>
<div class="a" style="left:1px;top:404px;width:664px;height:1px;background:#a0a0a0;"></div>
<svg class="i" style="left:18px;top:407px" width="16" height="16" viewBox="0 0 16 16"><use href="#lockf" width="16" height="16"/></svg>
<svg class="i" style="left:65px;top:407px" width="16" height="16" viewBox="0 0 16 16"><use href="#penf" width="16" height="16"/></svg>
<svg class="i" style="left:96.8px;top:406px" width="16" height="16" viewBox="0 0 16 16"><use href="#sgear" width="16" height="16"/></svg>
<div class="t" style="left:113.5px;top:407.0px;letter-spacing:-0.623px;">SN-023373</div>
<div class="t" style="left:211.9px;top:407.0px;letter-spacing:-0.102px;">LT Winkel, symmetrisch</div>
<svg class="i" style="left:416px;top:406px" width="16" height="16" viewBox="0 0 16 16"><use href="#wf" width="16" height="16"/></svg>
<div class="t" style="left:475.5px;top:407.0px;letter-spacing:-0.474px;">11.01.2010</div>
<div class="t" style="left:571.2px;top:407.0px;letter-spacing:0.132px;">Administrator</div>
<div class="t" style="left:655.8px;top:407.0px;letter-spacing:-0.563px;width:9.2px;overflow:hidden;">13.01.2010</div>
<div class="a" style="left:1px;top:423px;width:664px;height:1px;background:#a0a0a0;"></div>
<svg class="i" style="left:18px;top:426px" width="16" height="16" viewBox="0 0 16 16"><use href="#lockf" width="16" height="16"/></svg>
<svg class="i" style="left:65px;top:426px" width="16" height="16" viewBox="0 0 16 16"><use href="#penf" width="16" height="16"/></svg>
<svg class="i" style="left:96.8px;top:425px" width="16" height="16" viewBox="0 0 16 16"><use href="#sgear" width="16" height="16"/></svg>
<div class="t" style="left:113.5px;top:426.0px;letter-spacing:-0.623px;">SN-023374</div>
<div class="t" style="left:211.9px;top:426.0px;letter-spacing:-0.102px;">LT Winkel, symmetrisch</div>
<svg class="i" style="left:416px;top:425px" width="16" height="16" viewBox="0 0 16 16"><use href="#wf" width="16" height="16"/></svg>
<div class="t" style="left:475.5px;top:426.0px;letter-spacing:-0.474px;">11.01.2010</div>
<div class="t" style="left:571.2px;top:426.0px;letter-spacing:0.132px;">Administrator</div>
<div class="t" style="left:655.8px;top:426.0px;letter-spacing:-0.563px;width:9.2px;overflow:hidden;">13.01.2010</div>
<div class="a" style="left:1px;top:442px;width:664px;height:1px;background:#a0a0a0;"></div>
<svg class="i" style="left:18px;top:445px" width="16" height="16" viewBox="0 0 16 16"><use href="#lockf" width="16" height="16"/></svg>
<svg class="i" style="left:65px;top:445px" width="16" height="16" viewBox="0 0 16 16"><use href="#penf" width="16" height="16"/></svg>
<svg class="i" style="left:96.8px;top:444px" width="16" height="16" viewBox="0 0 16 16"><use href="#sgear" width="16" height="16"/></svg>
<div class="t" style="left:113.5px;top:445.0px;letter-spacing:-0.623px;">SN-023375</div>
<div class="t" style="left:211.9px;top:445.0px;letter-spacing:-0.102px;">LT Winkel, symmetrisch</div>
<svg class="i" style="left:416px;top:444px" width="16" height="16" viewBox="0 0 16 16"><use href="#wf" width="16" height="16"/></svg>
<div class="t" style="left:475.5px;top:445.0px;letter-spacing:-0.474px;">11.01.2010</div>
<div class="t" style="left:571.2px;top:445.0px;letter-spacing:0.132px;">Administrator</div>
<div class="t" style="left:655.8px;top:445.0px;letter-spacing:-0.563px;width:9.2px;overflow:hidden;">13.01.2010</div>
<div class="a" style="left:1px;top:461px;width:664px;height:1px;background:#a0a0a0;"></div>
<svg class="i" style="left:18px;top:464px" width="16" height="16" viewBox="0 0 16 16"><use href="#lockf" width="16" height="16"/></svg>
<svg class="i" style="left:65px;top:464px" width="16" height="16" viewBox="0 0 16 16"><use href="#penf" width="16" height="16"/></svg>
<svg class="i" style="left:96.8px;top:463px" width="16" height="16" viewBox="0 0 16 16"><use href="#sgear" width="16" height="16"/></svg>
<div class="t" style="left:113.5px;top:464.0px;letter-spacing:-0.623px;">SN-023376</div>
<div class="t" style="left:211.9px;top:464.0px;letter-spacing:-0.102px;">LT Winkel, symmetrisch</div>
<svg class="i" style="left:416px;top:463px" width="16" height="16" viewBox="0 0 16 16"><use href="#wf" width="16" height="16"/></svg>
<div class="t" style="left:475.5px;top:464.0px;letter-spacing:-0.474px;">11.01.2010</div>
<div class="t" style="left:571.2px;top:464.0px;letter-spacing:0.132px;">Administrator</div>
<div class="t" style="left:655.8px;top:464.0px;letter-spacing:-0.563px;width:9.2px;overflow:hidden;">13.01.2010</div>
<div class="a" style="left:1px;top:480px;width:664px;height:1px;background:#a0a0a0;"></div>
<svg class="i" style="left:18px;top:483px" width="16" height="16" viewBox="0 0 16 16"><use href="#lockf" width="16" height="16"/></svg>
<svg class="i" style="left:65px;top:483px" width="16" height="16" viewBox="0 0 16 16"><use href="#penf" width="16" height="16"/></svg>
<svg class="i" style="left:96.8px;top:482px" width="16" height="16" viewBox="0 0 16 16"><use href="#sgear" width="16" height="16"/></svg>
<div class="t" style="left:113.5px;top:483.0px;letter-spacing:-0.623px;">SN-023377</div>
<div class="t" style="left:211.9px;top:483.0px;letter-spacing:-0.102px;">LT Winkel, symmetrisch</div>
<svg class="i" style="left:416px;top:482px" width="16" height="16" viewBox="0 0 16 16"><use href="#wf" width="16" height="16"/></svg>
<div class="t" style="left:475.5px;top:483.0px;letter-spacing:-0.474px;">11.01.2010</div>
<div class="t" style="left:571.2px;top:483.0px;letter-spacing:0.132px;">Administrator</div>
<div class="t" style="left:655.8px;top:483.0px;letter-spacing:-0.563px;width:9.2px;overflow:hidden;">13.01.2010</div>
<div class="a" style="left:1px;top:499px;width:664px;height:1px;background:#a0a0a0;"></div>
<svg class="i" style="left:18px;top:502px" width="16" height="16" viewBox="0 0 16 16"><use href="#lockf" width="16" height="16"/></svg>
<svg class="i" style="left:65px;top:502px" width="16" height="16" viewBox="0 0 16 16"><use href="#penf" width="16" height="16"/></svg>
<svg class="i" style="left:96.8px;top:501px" width="16" height="16" viewBox="0 0 16 16"><use href="#sgear" width="16" height="16"/></svg>
<div class="t" style="left:113.5px;top:502.0px;letter-spacing:-0.623px;">SN-023378</div>
<div class="t" style="left:211.9px;top:502.0px;letter-spacing:-0.102px;">LT Winkel, symmetrisch</div>
<svg class="i" style="left:416px;top:501px" width="16" height="16" viewBox="0 0 16 16"><use href="#wf" width="16" height="16"/></svg>
<div class="t" style="left:475.5px;top:502.0px;letter-spacing:-0.474px;">11.01.2010</div>
<div class="t" style="left:571.2px;top:502.0px;letter-spacing:0.132px;">Administrator</div>
<div class="t" style="left:655.8px;top:502.0px;letter-spacing:-0.563px;width:9.2px;overflow:hidden;">13.01.2010</div>
<div class="a" style="left:1px;top:518px;width:664px;height:1px;background:#a0a0a0;"></div>
<svg class="i" style="left:18px;top:521px" width="16" height="16" viewBox="0 0 16 16"><use href="#lockf" width="16" height="16"/></svg>
<svg class="i" style="left:65px;top:521px" width="16" height="16" viewBox="0 0 16 16"><use href="#penf" width="16" height="16"/></svg>
<svg class="i" style="left:96.8px;top:520px" width="16" height="16" viewBox="0 0 16 16"><use href="#sgear" width="16" height="16"/></svg>
<div class="t" style="left:113.5px;top:521.0px;letter-spacing:-0.623px;">SN-023379</div>
<div class="t" style="left:211.9px;top:521.0px;letter-spacing:-0.102px;">LT Winkel, symmetrisch</div>
<svg class="i" style="left:416px;top:520px" width="16" height="16" viewBox="0 0 16 16"><use href="#wf" width="16" height="16"/></svg>
<div class="t" style="left:475.5px;top:521.0px;letter-spacing:-0.474px;">11.01.2010</div>
<div class="t" style="left:571.2px;top:521.0px;letter-spacing:0.132px;">Administrator</div>
<div class="t" style="left:655.8px;top:521.0px;letter-spacing:-0.563px;width:9.2px;overflow:hidden;">13.01.2010</div>
<div class="a" style="left:1px;top:537px;width:664px;height:1px;background:#a0a0a0;"></div>
<svg class="i" style="left:18px;top:540px" width="16" height="16" viewBox="0 0 16 16"><use href="#lockf" width="16" height="16"/></svg>
<svg class="i" style="left:65px;top:540px" width="16" height="16" viewBox="0 0 16 16"><use href="#penf" width="16" height="16"/></svg>
<svg class="i" style="left:96.8px;top:539px" width="16" height="16" viewBox="0 0 16 16"><use href="#sgear" width="16" height="16"/></svg>
<div class="t" style="left:113.5px;top:540.0px;letter-spacing:-0.623px;">SN-023380</div>
<div class="t" style="left:211.9px;top:540.0px;letter-spacing:-0.102px;">LT Winkel, symmetrisch</div>
<svg class="i" style="left:416px;top:539px" width="16" height="16" viewBox="0 0 16 16"><use href="#wf" width="16" height="16"/></svg>
<div class="t" style="left:475.5px;top:540.0px;letter-spacing:-0.474px;">11.01.2010</div>
<div class="t" style="left:571.2px;top:540.0px;letter-spacing:0.132px;">Administrator</div>
<div class="t" style="left:655.8px;top:540.0px;letter-spacing:-0.563px;width:9.2px;overflow:hidden;">13.01.2010</div>
<div class="a" style="left:1px;top:556px;width:664px;height:1px;background:#a0a0a0;"></div>
<svg class="i" style="left:18px;top:559px" width="16" height="16" viewBox="0 0 16 16"><use href="#lockf" width="16" height="16"/></svg>
<svg class="i" style="left:65px;top:559px" width="16" height="16" viewBox="0 0 16 16"><use href="#penf" width="16" height="16"/></svg>
<svg class="i" style="left:96.8px;top:558px" width="16" height="16" viewBox="0 0 16 16"><use href="#sgear" width="16" height="16"/></svg>
<div class="t" style="left:113.5px;top:559.0px;letter-spacing:-0.623px;">SN-023381</div>
<div class="t" style="left:211.9px;top:559.0px;letter-spacing:-0.102px;">LT Winkel, symmetrisch</div>
<svg class="i" style="left:416px;top:558px" width="16" height="16" viewBox="0 0 16 16"><use href="#wf" width="16" height="16"/></svg>
<div class="t" style="left:475.5px;top:559.0px;letter-spacing:-0.474px;">11.01.2010</div>
<div class="t" style="left:571.2px;top:559.0px;letter-spacing:0.132px;">Administrator</div>
<div class="t" style="left:655.8px;top:559.0px;letter-spacing:-0.563px;width:9.2px;overflow:hidden;">13.01.2010</div>
<div class="a" style="left:1px;top:575px;width:664px;height:1px;background:#a0a0a0;"></div>
<svg class="i" style="left:18px;top:578px" width="16" height="16" viewBox="0 0 16 16"><use href="#lockf" width="16" height="16"/></svg>
<svg class="i" style="left:65px;top:578px" width="16" height="16" viewBox="0 0 16 16"><use href="#penf" width="16" height="16"/></svg>
<svg class="i" style="left:96.8px;top:577px" width="16" height="16" viewBox="0 0 16 16"><use href="#sgear" width="16" height="16"/></svg>
<div class="t" style="left:113.5px;top:578.0px;letter-spacing:-0.623px;">SN-023382</div>
<div class="t" style="left:211.9px;top:578.0px;letter-spacing:-0.102px;">LT Winkel, symmetrisch</div>
<svg class="i" style="left:416px;top:577px" width="16" height="16" viewBox="0 0 16 16"><use href="#wf" width="16" height="16"/></svg>
<div class="t" style="left:475.5px;top:578.0px;letter-spacing:-0.474px;">11.01.2010</div>
<div class="t" style="left:571.2px;top:578.0px;letter-spacing:0.132px;">Administrator</div>
<div class="t" style="left:655.8px;top:578.0px;letter-spacing:-0.563px;width:9.2px;overflow:hidden;">13.01.2010</div>
<div class="a" style="left:1px;top:594px;width:664px;height:1px;background:#a0a0a0;"></div>
<svg class="i" style="left:18px;top:597px" width="16" height="16" viewBox="0 0 16 16"><use href="#lockf" width="16" height="16"/></svg>
<svg class="i" style="left:65px;top:597px" width="16" height="16" viewBox="0 0 16 16"><use href="#penf" width="16" height="16"/></svg>
<svg class="i" style="left:96.8px;top:596px" width="16" height="16" viewBox="0 0 16 16"><use href="#sgear" width="16" height="16"/></svg>
<div class="t" style="left:113.5px;top:597.0px;letter-spacing:-0.623px;">SN-023383</div>
<div class="t" style="left:211.9px;top:597.0px;letter-spacing:-0.102px;">LT Winkel, symmetrisch</div>
<svg class="i" style="left:416px;top:596px" width="16" height="16" viewBox="0 0 16 16"><use href="#wf" width="16" height="16"/></svg>
<div class="t" style="left:475.5px;top:597.0px;letter-spacing:-0.474px;">11.01.2010</div>
<div class="t" style="left:571.2px;top:597.0px;letter-spacing:0.132px;">Administrator</div>
<div class="t" style="left:655.8px;top:597.0px;letter-spacing:-0.563px;width:9.2px;overflow:hidden;">13.01.2010</div>
<div class="a" style="left:1px;top:613px;width:664px;height:1px;background:#a0a0a0;"></div>
<svg class="i" style="left:18px;top:616px" width="16" height="16" viewBox="0 0 16 16"><use href="#lockf" width="16" height="16"/></svg>
<svg class="i" style="left:65px;top:616px" width="16" height="16" viewBox="0 0 16 16"><use href="#penf" width="16" height="16"/></svg>
<svg class="i" style="left:96.8px;top:615px" width="16" height="16" viewBox="0 0 16 16"><use href="#sgear" width="16" height="16"/></svg>
<div class="t" style="left:113.5px;top:616.0px;letter-spacing:-0.623px;">SN-023384</div>
<div class="t" style="left:211.9px;top:616.0px;letter-spacing:-0.102px;">LT Winkel, symmetrisch</div>
<svg class="i" style="left:416px;top:615px" width="16" height="16" viewBox="0 0 16 16"><use href="#wf" width="16" height="16"/></svg>
<div class="t" style="left:475.5px;top:616.0px;letter-spacing:-0.474px;">11.01.2010</div>
<div class="t" style="left:571.2px;top:616.0px;letter-spacing:0.132px;">Administrator</div>
<div class="t" style="left:655.8px;top:616.0px;letter-spacing:-0.563px;width:9.2px;overflow:hidden;">13.01.2010</div>
<div class="a" style="left:1px;top:632px;width:664px;height:1px;background:#a0a0a0;"></div>
<div class="a" style="left:50px;top:234px;width:1px;height:392px;background:#a0a0a0;"></div>
<div class="a" style="left:95px;top:234px;width:1px;height:392px;background:#a0a0a0;"></div>
<div class="a" style="left:210px;top:234px;width:1px;height:392px;background:#a0a0a0;"></div>
<div class="a" style="left:340px;top:234px;width:1px;height:392px;background:#a0a0a0;"></div>
<div class="a" style="left:372px;top:234px;width:1px;height:392px;background:#a0a0a0;"></div>
<div class="a" style="left:474px;top:234px;width:1px;height:392px;background:#a0a0a0;"></div>
<div class="a" style="left:569px;top:234px;width:1px;height:392px;background:#a0a0a0;"></div>
<div class="a" style="left:654px;top:234px;width:1px;height:392px;background:#a0a0a0;"></div>
<div class="a" style="left:1px;top:626px;width:664px;height:16px;background:#f3f3f3;"></div>
<svg class="i" style="left:7px;top:630px" width="5" height="8"><path d="M4.5,0 V8 L0,4Z" fill="#a8a8a8"/></svg>
<div class="a" style="left:17px;top:631px;width:361px;height:6px;background:#a6a6a6;border-radius:3px"></div>
<svg class="i" style="left:655px;top:630px" width="5" height="8"><path d="M0.5,0 V8 L5,4Z" fill="#a8a8a8"/></svg>
<div class="a" style="left:665px;top:234px;width:16px;height:392px;background:#f3f3f3;"></div>
<div class="a" style="left:665px;top:211px;width:16px;height:23px;background:#ffffff;"></div>
<svg class="i" style="left:669px;top:240px" width="8" height="4"><path d="M0,4 H8 L4,0Z" fill="#b8b8b8"/></svg>
<div class="a" style="left:670px;top:250px;width:6px;height:55px;background:#a6a6a6;border-radius:3px"></div>
<svg class="i" style="left:669px;top:616px" width="8" height="4"><path d="M0,0 H8 L4,4Z" fill="#b8b8b8"/></svg>
<div class="a" style="left:665px;top:626px;width:16px;height:16px;background:#ffffff;"></div>
<div class="a" style="left:681px;top:210px;width:1px;height:432px;background:#e0e0e0;"></div>
<div class="a" style="left:0px;top:642px;width:682px;height:24px;background:#eeeeee;"></div>
<div class="a" style="left:0px;top:665px;width:682px;height:1px;background:#d4d4d4;"></div>
<div class="t" style="left:5.2px;top:646.0px;letter-spacing:-0.325px;">Anzahl der Datensätze: 132</div>
</body></html>
